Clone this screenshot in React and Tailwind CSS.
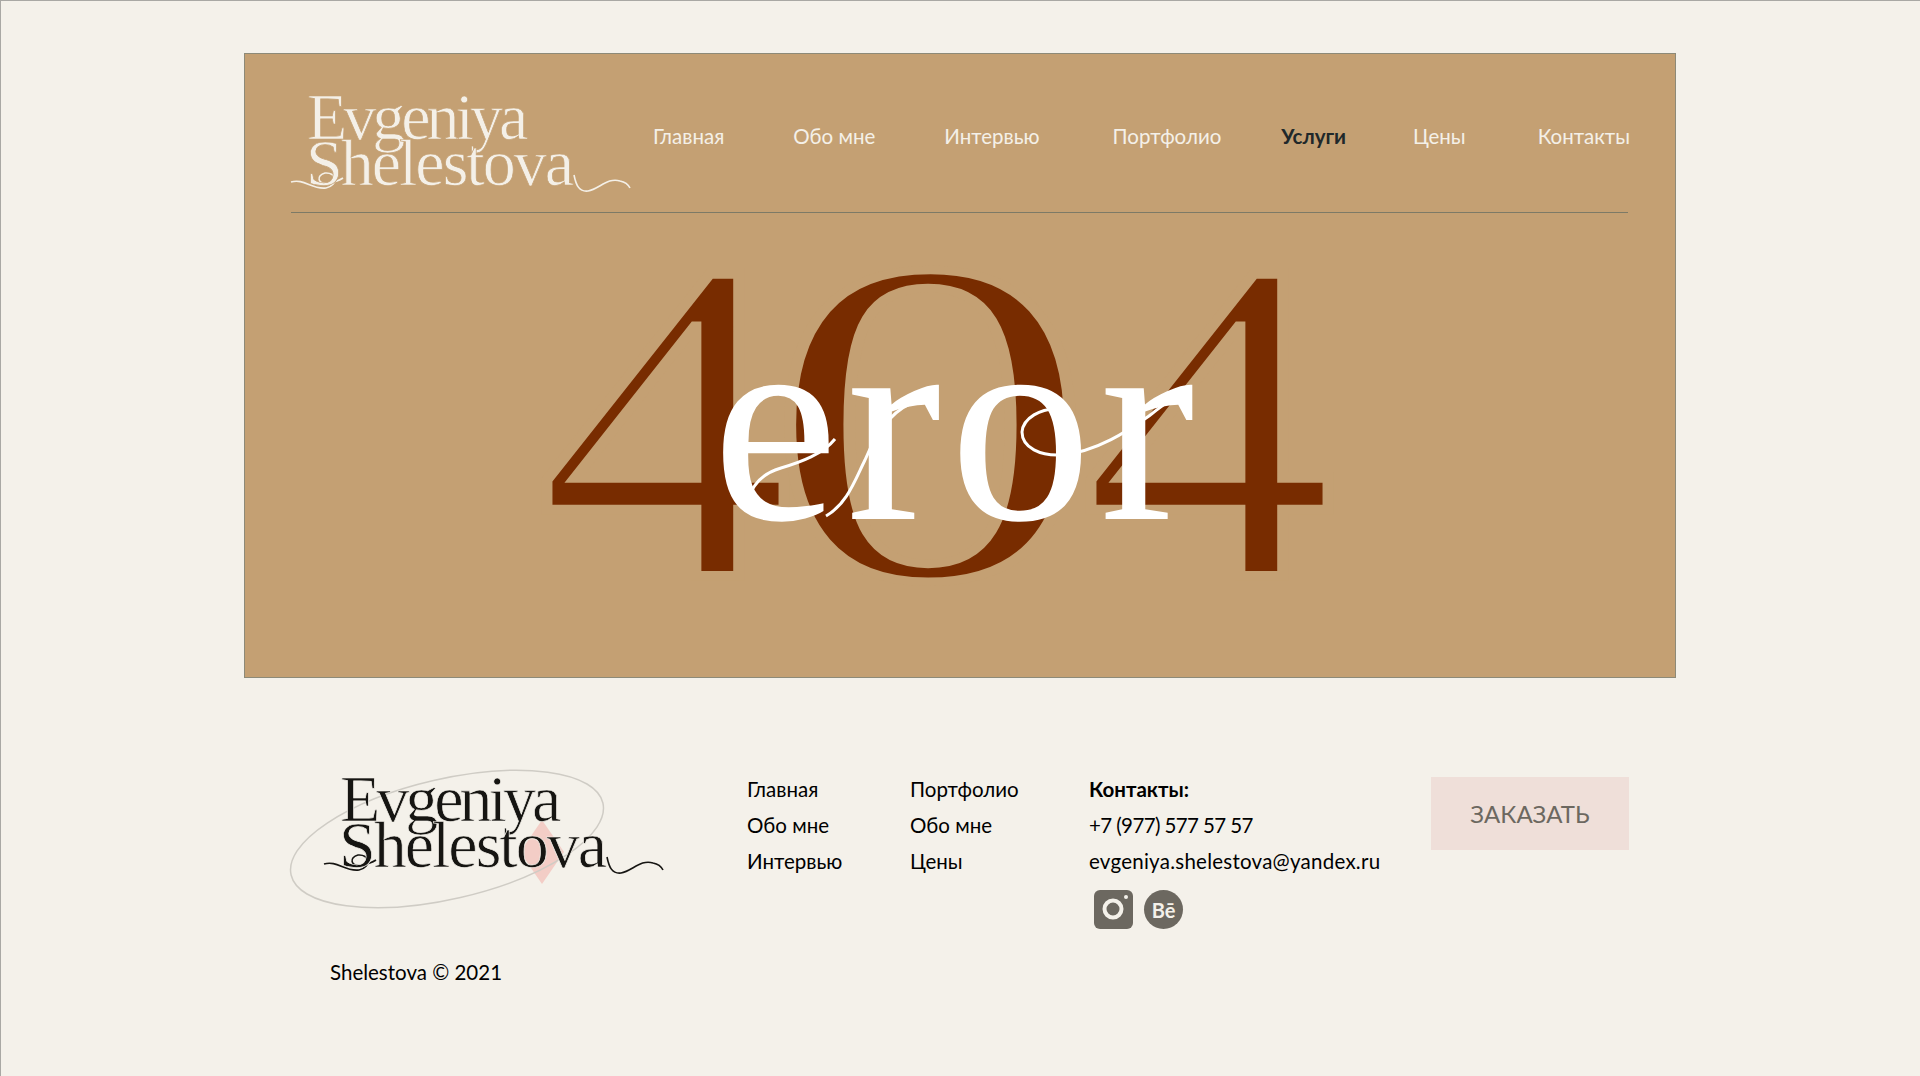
import React from 'react';

const NAV = [
    { label: 'Главная', className: 'text-[#f4f0e8]' },
    { label: 'Обо мне', className: 'ml-[69px] text-[#f4f0e8]' },
    { label: 'Интервью', className: 'ml-[69px] text-[#f4f0e8]' },
    { label: 'Портфолио', className: 'ml-[73px] text-[#f4f0e8]' },
    { label: 'Услуги', className: 'ml-[60px] font-bold text-[#20282a]' },
    { label: 'Цены', className: 'ml-[67px] text-[#f4f0e8]' },
    { label: 'Контакты', className: 'ml-[72px] text-[#f4f0e8]' },
];
const serif = "font-['Liberation_Serif',serif]";

function Logo({ className, color, thin, oval }) {
    return (
        <div className={`relative h-[106px] w-[345px] ${className}`}>
            {oval && (
                <svg className="absolute left-[-66px] top-[-12px]" width="384" height="150" viewBox="0 0 384 150" fill="none">
                    <path d="M 263 89 L 285 57 L 307 89 L 285 121 Z" fill="#f3cdc6" />
                    <ellipse cx="190" cy="76" rx="160" ry="60" transform="rotate(-13 190 76)" stroke="#cfccc5" strokeWidth="1.5" />
                </svg>
            )}
            <svg className="absolute left-0 top-0" width="345" height="106" viewBox="0 0 345 106" fill="none" stroke={color} strokeWidth="1.6">
                <path d="M 1 89 C 14 85 22 97 36 95 C 49 92 47 79 35 80 C 26 82 27 92 39 90 C 45 89 50 87 53 85" />
                <path d="M 284 82 C 286 92 289 99 298 98 C 309 96 318 84 330 88 C 335 89 338 91 340 95" />
            </svg>
            <div className={`relative pl-[17px] pt-[1px] text-[66px] leading-[46px] ${serif} ${thin}`} style={{ color }}>
                <div className="tracking-[-4px]">Evgeniya</div>
                <div className="ml-[-1px] tracking-[-2px]">Shelestova</div>
            </div>
        </div>
    );
}

function Hero() {
    return (
        <div className="relative h-[462px] pt-[58px]">
            <div className={`ml-[246px] flex h-[301px] leading-[301px] text-[#782c00] ${serif}`}>
                <span className="w-[228px] scale-y-[0.9] text-[510px] [-webkit-text-stroke:11px_#c4a073]">4</span>
                <span className="w-[316px] scale-y-[0.7] text-[660px] [-webkit-text-stroke:12px_#c4a073]">0</span>
                <span className="scale-y-[0.9] text-[510px] [-webkit-text-stroke:11px_#c4a073]">4</span>
            </div>
            <div className={`absolute left-[421px] top-[146px] text-[285px] leading-[129px] tracking-[8px] text-white ${serif}`}>eror</div>
            <svg className="absolute left-[428px] top-[179px]" width="490" height="140" viewBox="0 0 490 140" fill="none" stroke="#ffffff" strokeWidth="3">
                <path d="M 30 105 C 36 88 48 80 62 76 C 82 70 104 62 116 47" />
                <path d="M 107 124 C 128 112 136 88 146 68 C 156 44 172 16 199 9" />
                <path d="M 339 17 C 322 16 304 26 303 40 C 303 56 322 64 342 63 C 378 60 410 38 430 24 C 440 16 448 10 454 7" />
            </svg>
        </div>
    );
}

function SocialIcons() {
    return (
        <div className="ml-[5px] mt-[11px] flex items-center gap-[11px]">
            <svg width="39" height="39" viewBox="0 0 39 39">
                <rect width="39" height="39" rx="6" fill="#6c6860" />
                <circle cx="19" cy="19" r="8.5" fill="none" stroke="#f4f1ea" strokeWidth="4" />
                <circle cx="32" cy="7" r="2" fill="#f4f1ea" />
            </svg>
            <div className="flex h-[39px] w-[39px] items-center justify-center rounded-full bg-[#6c6860] text-[20px] font-bold text-[#f4f1ea]">Bē</div>
        </div>
    );
}

export default function App() {
    return (
        <div className="h-[1076px] w-full overflow-hidden border-l border-t border-[#a9a8a4] bg-[#f4f1ea] font-['Lato','Noto_Sans',sans-serif]">
            <div className="ml-[243px] mt-[52px] h-[625px] w-[1432px] border border-[#8d8a78] bg-[#c4a073] pl-[46px] pr-[47px]">
                <header className="flex h-[159px] items-center border-b border-[#7d7a66]">
                    <Logo className="ml-[-1px] mt-[25px] shrink-0" color="#f4f0e8" thin="[-webkit-text-stroke:0.7px_#c4a073]" />
                    <nav className="ml-[18px] flex flex-1 whitespace-nowrap pt-[6px] text-[20.5px]">
                        {NAV.map((item) => (
                            <a key={item.label} className={item.className}>{item.label}</a>
                        ))}
                    </nav>
                </header>
                <Hero />
            </div>
            <footer className="ml-[290px] mt-[93px] flex w-[1338px] items-start text-[20.5px] leading-[36px] text-black">
                <div className="w-[456px]">
                    <Logo className="ml-[32px] mt-[4px]" color="#161512" thin="[-webkit-text-stroke:0.7px_#f4f1ea]" oval />
                    <div className="ml-[39px] mt-[73px]">Shelestova © 2021</div>
                </div>
                <div className="w-[163px]">
                    <div>Главная</div>
                    <div>Обо мне</div>
                    <div>Интервью</div>
                </div>
                <div className="w-[179px]">
                    <div>Портфолио</div>
                    <div>Обо мне</div>
                    <div>Цены</div>
                </div>
                <div className="w-[342px]">
                    <div className="font-bold">Контакты:</div>
                    <div className="tracking-[-0.6px]">+7 (977) 577 57 57</div>
                    <div className="tracking-[0.25px]">evgeniya.shelestova@yandex.ru</div>
                    <SocialIcons />
                </div>
                <button className="mt-[6px] flex h-[73px] w-[198px] items-center justify-center bg-[#efdfd9] text-[24px] text-[#6c6860]">ЗАКАЗАТЬ</button>
            </footer>
        </div>
    );
}
